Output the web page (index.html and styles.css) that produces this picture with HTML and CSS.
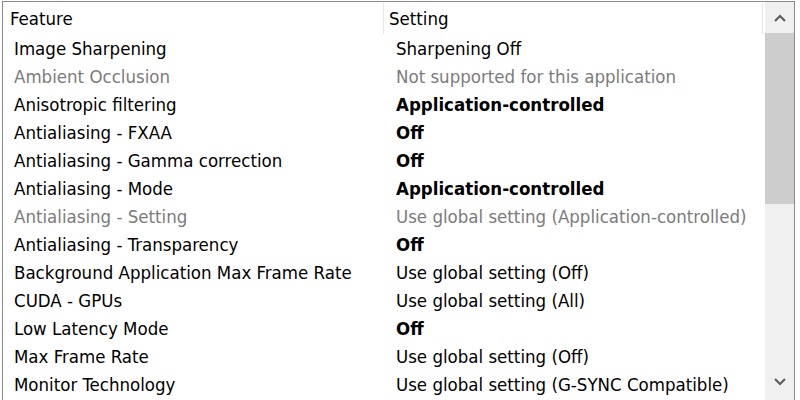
FILE: index.html
```html
<!DOCTYPE html>
<html>
<head>
<meta charset="utf-8">
<link rel="stylesheet" href="styles.css">
</head>
<body>
<div class="listview">
  <div class="main">
    <div class="header">
      <div class="hcell c1">Feature</div>
      <div class="hcell c2">Setting</div>
    </div>
    <div class="rows">
      <div class="row"><div class="cell c1">Image Sharpening</div><div class="cell c2">Sharpening Off</div></div>
      <div class="row dis"><div class="cell c1">Ambient Occlusion</div><div class="cell c2">Not supported for this application</div></div>
      <div class="row"><div class="cell c1">Anisotropic filtering</div><div class="cell c2 b">Application-controlled</div></div>
      <div class="row"><div class="cell c1">Antialiasing - FXAA</div><div class="cell c2 b">Off</div></div>
      <div class="row"><div class="cell c1">Antialiasing - Gamma correction</div><div class="cell c2 b">Off</div></div>
      <div class="row"><div class="cell c1">Antialiasing - Mode</div><div class="cell c2 b">Application-controlled</div></div>
      <div class="row dis"><div class="cell c1">Antialiasing - Setting</div><div class="cell c2">Use global setting (Application-controlled)</div></div>
      <div class="row"><div class="cell c1">Antialiasing - Transparency</div><div class="cell c2 b">Off</div></div>
      <div class="row"><div class="cell c1">Background Application Max Frame Rate</div><div class="cell c2">Use global setting (Off)</div></div>
      <div class="row"><div class="cell c1">CUDA - GPUs</div><div class="cell c2">Use global setting (All)</div></div>
      <div class="row"><div class="cell c1">Low Latency Mode</div><div class="cell c2 b">Off</div></div>
      <div class="row"><div class="cell c1">Max Frame Rate</div><div class="cell c2">Use global setting (Off)</div></div>
      <div class="row"><div class="cell c1">Monitor Technology</div><div class="cell c2">Use global setting (G-SYNC Compatible)</div></div>
    </div>
  </div>
  <div class="scrollbar">
    <div class="sbtn">
      <svg width="12" height="8" viewBox="0 0 12 8"><path d="M1 7 L6 2 L11 7" fill="none" stroke="#606060" stroke-width="2.2"/></svg>
    </div>
    <div class="thumb"></div>
    <div class="track"></div>
    <div class="sbtn down">
      <svg width="12" height="8" viewBox="0 0 12 8"><path d="M1 1 L6 6 L11 1" fill="none" stroke="#606060" stroke-width="2.2"/></svg>
    </div>
  </div>
</div>
</body>
</html>
```
FILE: styles.css
```css
html, body {
  margin: 0;
  padding: 0;
  background: #ffffff;
  overflow: hidden;
}
body {
  font-family: "DejaVu Sans Condensed", "DejaVu Sans", sans-serif;
  font-size: 18.5px;
  color: #000000;
}
.listview {
  margin: 1px 0 0 2px;
  width: 791px;
  height: 400px;
  border: 1px solid #8a8a8a;
  border-bottom: none;
  display: flex;
  overflow: hidden;
}
.main {
  width: 762px;
  display: flex;
  flex-direction: column;
}
.header {
  height: 32px;
  display: flex;
  align-items: stretch;
}
.hcell {
  border-right: 1px solid #e5e5e5;
  margin-top: 1px;
  padding-top: 2px;
  display: flex;
  align-items: center;
  line-height: 1;
  white-space: nowrap;
}
.hcell.c1 {
  width: 373px;
  padding-left: 7px;
}
.hcell.c2 {
  width: 373px;
  padding-left: 5px;
}
.rows {
  display: flex;
  flex-direction: column;
}
.row {
  box-sizing: border-box;
  height: 28px;
  padding-top: 2px;
  display: flex;
  align-items: center;
  white-space: nowrap;
  line-height: 1;
}
.cell.c1 {
  width: 370px;
  padding-left: 11px;
}
.cell.c2 {
  padding-left: 12px;
}
.b {
  font-weight: bold;
}
.dis {
  color: #7b7b7b;
}
.scrollbar {
  width: 29px;
  display: flex;
  flex-direction: column;
  background: #f0f0f0;
}
.sbtn {
  height: 31px;
  display: flex;
  align-items: center;
  justify-content: center;
  flex: none;
}
.sbtn.down {
  height: 30px;
  align-items: flex-start;
  padding-top: 9px;
  box-sizing: border-box;
}
.thumb {
  height: 171px;
  background: #cdcdcd;
  flex: none;
}
.track {
  height: 165px;
  flex: none;
}
```
